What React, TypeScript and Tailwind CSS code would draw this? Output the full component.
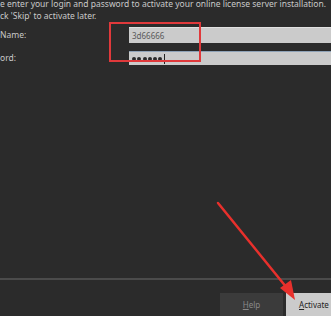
import React from 'react'

const font = { fontFamily: '"Noto Sans", "Liberation Sans", sans-serif' }

function Field({ label, value, focused }: { label: string; value: React.ReactNode; focused?: boolean }) {
    return (
        <div className="flex items-center">
            <div className="w-[129px] text-[8.5px] text-[#c9c9c9] leading-none">{label}</div>
            <div
                className={
                    'flex-1 flex items-center pl-[3px] bg-[#cbcbcb] border-t ' +
                    (focused ? 'h-[14px] border-[#8fa3b8]' : 'h-[16px] border-[#e0e0e0]')
                }
            >
                {value}
            </div>
        </div>
    )
}

export default function App() {
    return (
        <div style={font} className="relative w-[331px] h-[316px] bg-[#2b2b2b] overflow-hidden flex flex-col">
            <div className="-mt-[2px] text-[8.5px] leading-[12px] text-[#c9c9c9] whitespace-nowrap">
                <div>e enter your login and password to activate your online license server installation.</div>
                <div>ck 'Skip' to activate later.</div>
            </div>

            <div className="mt-[5px] flex flex-col gap-[8px]">
                <Field label="Name:" value={<span className="text-[8px] text-[#5a5a5a]">3d66666</span>} />
                <Field
                    label="ord:"
                    focused
                    value={
                        <span className="flex items-center h-full">
                            {[0, 1, 2, 3, 4, 5].map((i) => (
                                <span key={i} className="w-[4px] h-[4px] mr-[1.3px] rounded-full bg-[#2a2a2a]" />
                            ))}
                            <span className="w-px h-[10px] bg-[#222]" />
                        </span>
                    }
                />
            </div>

            <div className="flex-1" />

            <div className="h-[2px] bg-[#4b4b4b]" />

            <div className="mt-[13px] -mb-[6px] flex justify-end gap-[3px]">
                <button className="w-[63px] h-[29px] bg-[#3b3b3b] text-[8px] text-[#8a8a8a] pb-[6px]">
                    <span className="underline">H</span>elp
                </button>
                <button className="w-[45px] h-[29px] bg-[#cbcbcb] text-[8px] text-[#222] pb-[6px] pl-[13px] text-left">
                    <span className="underline">A</span>ctivate
                </button>
            </div>

            <div className="absolute left-[109px] top-[22px] w-[92px] h-[40px] border-2 border-[#e0393b]" />

            <svg className="absolute inset-0" width="331" height="316" viewBox="0 0 331 316">
                <line x1="218" y1="203" x2="287" y2="288" stroke="#e8302c" strokeWidth="2.5" strokeLinecap="round" />
                <polygon points="295,300 280,288 291,280" fill="#e8302c" />
            </svg>
        </div>
    )
}
